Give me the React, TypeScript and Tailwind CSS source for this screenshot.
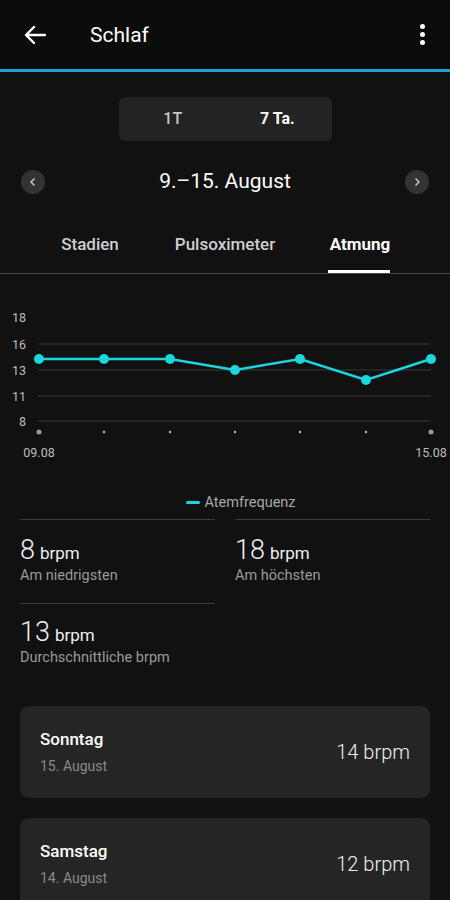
import React from "react";

const pts = [
  { x: 39, y: 359 },
  { x: 104, y: 359 },
  { x: 170, y: 359 },
  { x: 235, y: 370 },
  { x: 300, y: 359 },
  { x: 366, y: 380 },
  { x: 431, y: 359 },
];

function Chart() {
  const grid = [
    { v: "18", y: 317, line: false },
    { v: "16", y: 344, line: true },
    { v: "13", y: 370, line: true },
    { v: "11", y: 396, line: true },
    { v: "8", y: 421, line: true },
  ];
  return (
    <svg width="450" height="170" viewBox="0 300 450 170" className="block">
      {grid.map((g) => (
        <g key={g.v}>
          {g.line && <line x1="38" x2="431" y1={g.y} y2={g.y} stroke="#3a3a3a" strokeWidth="1" />}
          <text x="26" y={g.y + 4.5} textAnchor="end" fontSize="12.5" fill="#bdbdbd" fontFamily="Roboto, sans-serif">
            {g.v}
          </text>
        </g>
      ))}
      <polyline
        points={pts.map((p) => `${p.x},${p.y}`).join(" ")}
        fill="none"
        stroke="#1bd6dd"
        strokeWidth="2.5"
      />
      {pts.map((p, i) => (
        <circle key={i} cx={p.x} cy={p.y} r="5" fill="#1bd6dd" />
      ))}
      {pts.map((p, i) => (
        <circle
          key={"t" + i}
          cx={p.x}
          cy={432}
          r={i === 0 || i === pts.length - 1 ? 2.5 : 1.2}
          fill={i === 0 || i === pts.length - 1 ? "#9a9a9a" : "#bdbdbd"}
        />
      ))}
      <text x="39" y="457" textAnchor="middle" fontSize="12.5" fill="#bdbdbd" fontFamily="Roboto, sans-serif">
        09.08
      </text>
      <text x="431" y="457" textAnchor="middle" fontSize="12.5" fill="#bdbdbd" fontFamily="Roboto, sans-serif">
        15.08
      </text>
    </svg>
  );
}

function Stat({ n, label, tight }: { n: string; label: string; tight?: boolean }) {
  return (
    <div className={tight ? "border-t border-[#3c3c3c] pt-[15px]" : "border-t border-[#3c3c3c] pt-[17px]"}>
      <div className="flex items-baseline text-[#f0f0f0] leading-none">
        <span className="text-[27px] font-light">{n}</span>
        <span className="text-[17px] ml-[5px]">brpm</span>
      </div>
      <div className="text-[14.5px] text-[#9a9a9a] mt-[1px]">{label}</div>
    </div>
  );
}

function DayCard({ day, date, val }: { day: string; date: string; val: string }) {
  return (
    <div className="mx-5 rounded-[9px] bg-[#252525] h-[92px] flex items-center justify-between px-5">
      <div className="flex flex-col">
        <span className="text-[17px] font-medium text-white leading-none">{day}</span>
        <span className="text-[14px] text-[#8a8a8a] mt-[11px] leading-none">{date}</span>
      </div>
      <span className="text-[20px] font-light text-[#f0f0f0]">{val}</span>
    </div>
  );
}

export default function App() {
  return (
    <div className="w-[450px] h-[900px] overflow-hidden bg-[#111111] text-white" style={{ fontFamily: "Roboto, 'Noto Sans', sans-serif" }}>
      {/* header */}
      <div className="h-[69px] bg-[#0c0c0c] flex items-center px-[24px]">
        <svg width="22" height="20" viewBox="0 0 22 20" className="shrink-0 mt-[1px]">
          <path d="M21 10H3M10 2L2 10L10 18" stroke="#ffffff" strokeWidth="2.4" fill="none" strokeLinecap="round" strokeLinejoin="round" />
        </svg>
        <span className="ml-[44px] mt-[3px] text-[21px] text-white">Schlaf</span>
        <div className="ml-auto flex flex-col gap-[3px] items-center mr-[1px]">
          <span className="w-[5px] h-[5px] rounded-full bg-white" />
          <span className="w-[5px] h-[5px] rounded-full bg-white" />
          <span className="w-[5px] h-[5px] rounded-full bg-white" />
        </div>
      </div>
      <div className="h-[3px] bg-[#1fa2d2]" />

      {/* segmented */}
      <div className="flex justify-center pt-[25px]">
        <div className="w-[213px] h-[44px] rounded-[6px] bg-[#232323] flex items-center text-[16px]">
          <span className="w-1/2 text-center text-[#c8c8c8] font-medium pl-[2px]">1T</span>
          <span className="w-1/2 text-center text-white font-bold pr-[2px]">7 Ta.</span>
        </div>
      </div>

      {/* date row */}
      <div className="flex items-center justify-between px-[21px] mt-[29px] h-[24px]">
        <div className="w-[24px] h-[24px] rounded-full bg-[#333333] flex items-center justify-center">
          <svg width="8" height="10" viewBox="0 0 8 10">
            <path d="M5.5 1.5L2 5L5.5 8.5" stroke="#cfcfcf" strokeWidth="1.4" fill="none" />
          </svg>
        </div>
        <span className="text-[21px] text-white">9.–15. August</span>
        <div className="w-[24px] h-[24px] rounded-full bg-[#333333] flex items-center justify-center">
          <svg width="8" height="10" viewBox="0 0 8 10">
            <path d="M2.5 1.5L6 5L2.5 8.5" stroke="#cfcfcf" strokeWidth="1.4" fill="none" />
          </svg>
        </div>
      </div>

      {/* tabs */}
      <div className="mt-[38px] relative">
        <div className="flex text-[17px] font-medium h-[41px]">
          <div className="w-[180px] flex justify-center">
            <span className="text-[#cfcfcf]">Stadien</span>
          </div>
          <div className="w-[90px] flex justify-center">
            <span className="text-[#cfcfcf] whitespace-nowrap">Pulsoximeter</span>
          </div>
          <div className="w-[180px] flex justify-center">
            <span className="text-white font-bold">Atmung</span>
          </div>
        </div>
        <div className="h-[1px] bg-[#4a4a4a]" />
        <div className="absolute left-[328px] top-[38px] w-[62px] h-[3px] bg-white" />
      </div>

      {/* chart */}
      <div className="mt-[26px]">
        <Chart />
      </div>

      {/* legend */}
      <div className="flex items-center justify-center pl-[32px] mt-[22px] text-[14.5px] text-[#a8a8a8]">
        <span className="w-[14px] h-[3px] bg-[#1bd6dd] rounded-full mr-[4px]" />
        <span>Atemfrequenz</span>
      </div>

      {/* stats */}
      <div className="grid grid-cols-2 gap-x-[20px] px-5 mt-[5px]">
        <Stat n="8" label="Am niedrigsten" />
        <Stat n="18" label="Am höchsten" />
        <div className="mt-[16px]">
          <Stat n="13" label="Durchschnittliche brpm" tight />
        </div>
      </div>

      {/* cards */}
      <div className="flex flex-col gap-[20px] mt-[38px]">
        <DayCard day="Sonntag" date="15. August" val="14 brpm" />
        <DayCard day="Samstag" date="14. August" val="12 brpm" />
      </div>
    </div>
  );
}
